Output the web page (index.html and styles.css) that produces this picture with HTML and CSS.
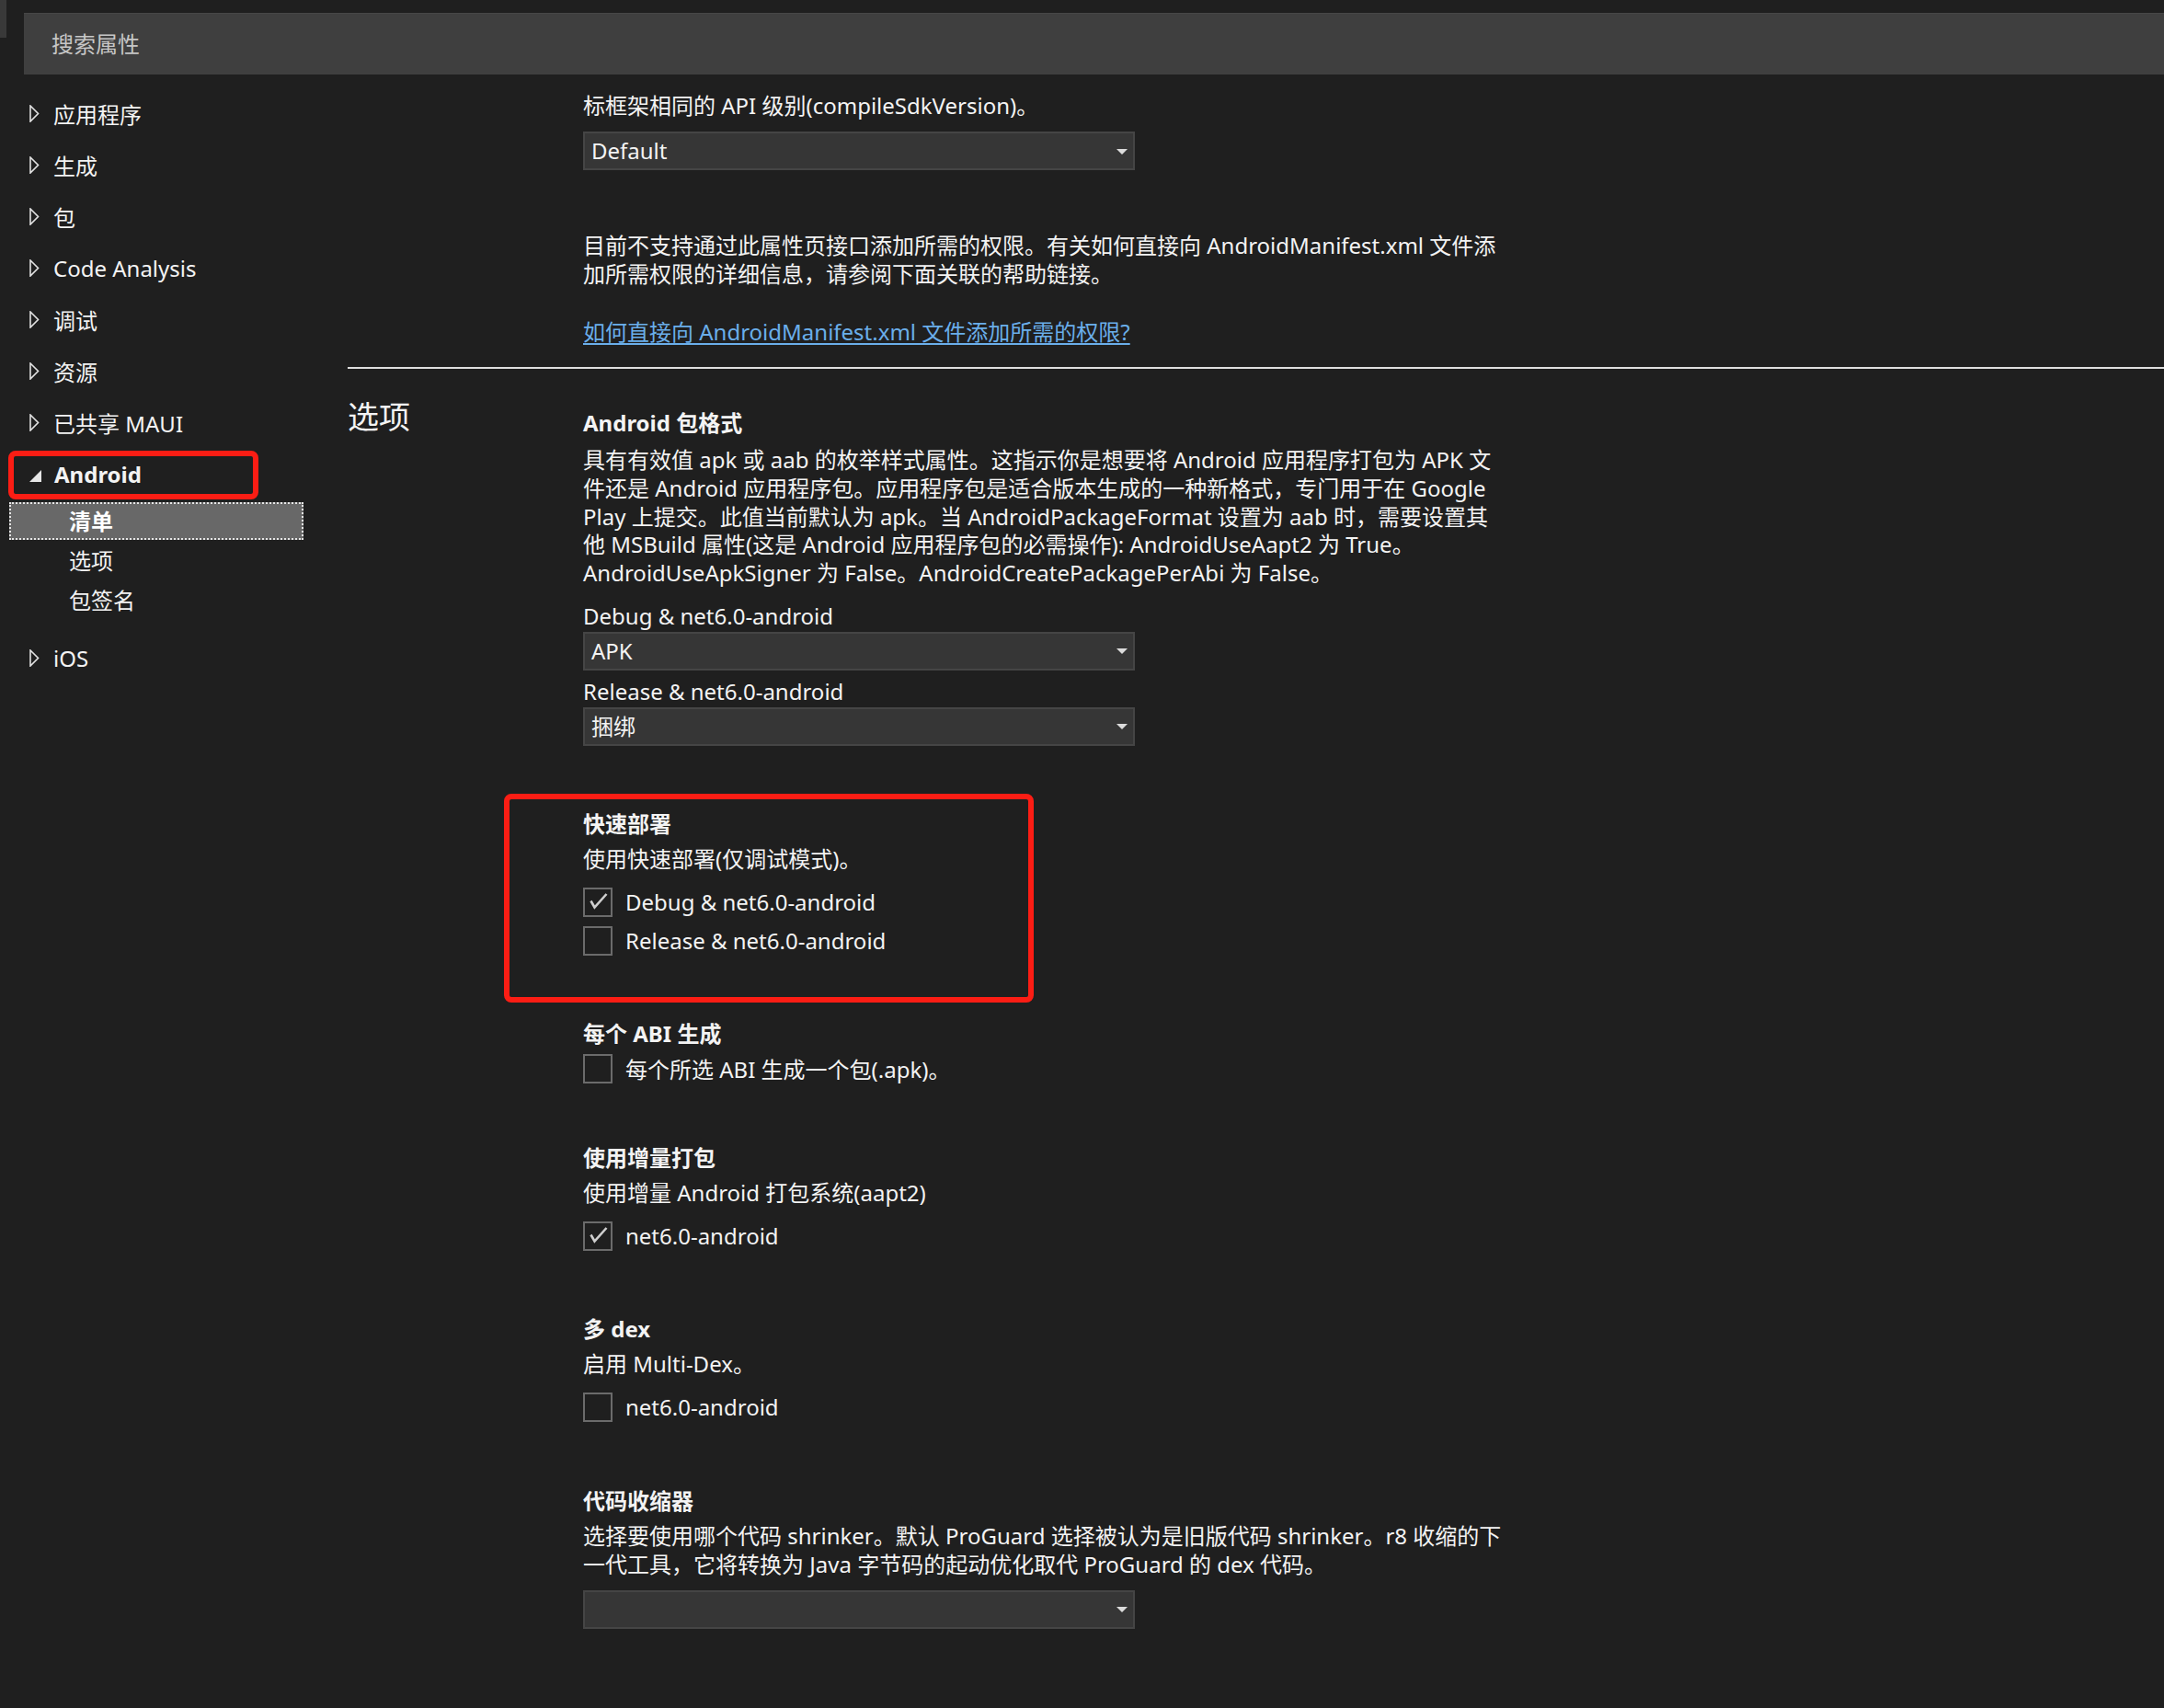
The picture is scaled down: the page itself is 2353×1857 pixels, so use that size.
FILE: index.html
```html
<!DOCTYPE html>
<html lang="zh-CN">
<head>
<meta charset="utf-8">
<title>属性</title>
<link rel="stylesheet" href="styles.css">
</head>
<body>
<div class="window">
  <header class="topbar">
    <div class="corner"></div>
    <div class="search">搜索属性</div>
  </header>
  <div class="main">
    <nav class="sidebar">
      <div class="node"><span class="twisty"><svg width="11" height="19" viewBox="0 0 11 19"><polygon points="1,1 9.5,9.5 1,18" fill="none" stroke="#e2e2e2" stroke-width="1.6" stroke-linejoin="miter"/></svg></span><span class="label">应用程序</span></div>
      <div class="node"><span class="twisty"><svg width="11" height="19" viewBox="0 0 11 19"><polygon points="1,1 9.5,9.5 1,18" fill="none" stroke="#e2e2e2" stroke-width="1.6"/></svg></span><span class="label">生成</span></div>
      <div class="node"><span class="twisty"><svg width="11" height="19" viewBox="0 0 11 19"><polygon points="1,1 9.5,9.5 1,18" fill="none" stroke="#e2e2e2" stroke-width="1.6"/></svg></span><span class="label">包</span></div>
      <div class="node"><span class="twisty"><svg width="11" height="19" viewBox="0 0 11 19"><polygon points="1,1 9.5,9.5 1,18" fill="none" stroke="#e2e2e2" stroke-width="1.6"/></svg></span><span class="label">Code Analysis</span></div>
      <div class="node"><span class="twisty"><svg width="11" height="19" viewBox="0 0 11 19"><polygon points="1,1 9.5,9.5 1,18" fill="none" stroke="#e2e2e2" stroke-width="1.6"/></svg></span><span class="label">调试</span></div>
      <div class="node"><span class="twisty"><svg width="11" height="19" viewBox="0 0 11 19"><polygon points="1,1 9.5,9.5 1,18" fill="none" stroke="#e2e2e2" stroke-width="1.6"/></svg></span><span class="label">资源</span></div>
      <div class="node"><span class="twisty"><svg width="11" height="19" viewBox="0 0 11 19"><polygon points="1,1 9.5,9.5 1,18" fill="none" stroke="#e2e2e2" stroke-width="1.6"/></svg></span><span class="label">已共享 MAUI</span></div>
      <div class="node expanded"><span class="twisty open"><svg width="13" height="13" viewBox="0 0 13 13"><polygon points="13,0 13,13 0,13" fill="#e6e6e6"/></svg></span><span class="label">Android</span><div class="annot annot-nav"></div></div>
      <div class="child selected">清单</div>
      <div class="child">选项</div>
      <div class="child">包签名</div>
      <div class="node ios"><span class="twisty"><svg width="11" height="19" viewBox="0 0 11 19"><polygon points="1,1 9.5,9.5 1,18" fill="none" stroke="#e2e2e2" stroke-width="1.6"/></svg></span><span class="label">iOS</span></div>
    </nav>

    <main class="content">
      <div class="top-block">
        <p class="line">标框架相同的 API 级别(compileSdkVersion)。</p>
        <div class="select select-top"><span>Default</span><svg width="12" height="6" viewBox="0 0 12 6"><polygon points="0,0 12,0 6,6" fill="#dcdcdc"/></svg></div>
        <p class="para para-note">目前不支持通过此属性页接口添加所需的权限。有关如何直接向 AndroidManifest.xml 文件添<br>加所需权限的详细信息，请参阅下面关联的帮助链接。</p>
        <p class="link-line"><a class="link" href="#">如何直接向 AndroidManifest.xml 文件添加所需的权限?</a></p>
      </div>
      <div class="divider"></div>

      <section class="group">
        <h2 class="group-title">选项</h2>
        <div class="fields">
          <div class="section first">
            <div class="title">Android 包格式</div>
            <p class="para desc desc-wide">具有有效值 apk 或 aab 的枚举样式属性。这指示你是想要将 Android 应用程序打包为 APK 文<br>件还是 Android 应用程序包。应用程序包是适合版本生成的一种新格式，专门用于在 Google<br>Play 上提交。此值当前默认为 apk。当 AndroidPackageFormat 设置为 aab 时，需要设置其<br>他 MSBuild 属性(这是 Android 应用程序包的必需操作): AndroidUseAapt2 为 True。<br>AndroidUseApkSigner 为 False。AndroidCreatePackagePerAbi 为 False。</p>
            <div class="config-label first-label">Debug &amp; net6.0-android</div>
            <div class="select after-label"><span>APK</span><svg width="12" height="6" viewBox="0 0 12 6"><polygon points="0,0 12,0 6,6" fill="#dcdcdc"/></svg></div>
            <div class="config-label">Release &amp; net6.0-android</div>
            <div class="select after-label"><span>捆绑</span><svg width="12" height="6" viewBox="0 0 12 6"><polygon points="0,0 12,0 6,6" fill="#dcdcdc"/></svg></div>
          </div>

          <div class="section marked">
            <div class="annot annot-deploy"></div>
            <div class="title">快速部署</div>
            <p class="para desc">使用快速部署(仅调试模式)。</p>
            <div class="check-list">
              <div class="check"><span class="box"><svg width="28" height="28" viewBox="0 0 28 28"><path d="M6.5 12.5 L10.5 19.5 L23.5 5" fill="none" stroke="#cfcfcf" stroke-width="2.6"/></svg></span><span>Debug &amp; net6.0-android</span></div>
              <div class="check"><span class="box"></span><span>Release &amp; net6.0-android</span></div>
            </div>
          </div>

          <div class="section">
            <div class="title">每个 ABI 生成</div>
            <div class="check-list tight">
              <div class="check"><span class="box"></span><span>每个所选 ABI 生成一个包(.apk)。</span></div>
            </div>
          </div>

          <div class="section incr">
            <div class="title">使用增量打包</div>
            <p class="para desc">使用增量 Android 打包系统(aapt2)</p>
            <div class="check-list">
              <div class="check"><span class="box"><svg width="28" height="28" viewBox="0 0 28 28"><path d="M6.5 12.5 L10.5 19.5 L23.5 5" fill="none" stroke="#cfcfcf" stroke-width="2.6"/></svg></span><span>net6.0-android</span></div>
            </div>
          </div>

          <div class="section">
            <div class="title">多 dex</div>
            <p class="para desc">启用 Multi-Dex。</p>
            <div class="check-list">
              <div class="check"><span class="box"></span><span>net6.0-android</span></div>
            </div>
          </div>

          <div class="section shrink">
            <div class="title">代码收缩器</div>
            <p class="para desc">选择要使用哪个代码 shrinker。默认 ProGuard 选择被认为是旧版代码 shrinker。r8 收缩的下<br>一代工具，它将转换为 Java 字节码的起动优化取代 ProGuard 的 dex 代码。</p>
            <div class="select select-shrink"><span></span><svg width="12" height="6" viewBox="0 0 12 6"><polygon points="0,0 12,0 6,6" fill="#dcdcdc"/></svg></div>
          </div>
        </div>
      </section>
    </main>
  </div>
</div>
</body>
</html>
```

FILE: styles.css
```css
html, body {
  margin: 0;
  padding: 0;
  background: #1f1f1f;
}

body {
  min-height: 100vh;
  font-family: "Noto Sans", "Noto Sans CJK SC", sans-serif;
  font-size: 24px;
  color: #f3f3f3;
}

.window {
  min-height: 1857px;
  background: #1f1f1f;
}

/* ---------- top bar ---------- */
.topbar {
  display: flex;
  align-items: flex-start;
}

.corner {
  flex: none;
  width: 7px;
  height: 41px;
  background: #393939;
}

.search {
  flex: 1;
  margin-left: 19px;
  margin-top: 14px;
  height: 67px;
  line-height: 67px;
  padding-left: 30px;
  background: #3f3f3f;
  box-shadow: inset 0 1px 0 #474747;
  color: #c6c6c6;
  font-size: 24px;
}

/* ---------- layout ---------- */
.main {
  display: flex;
  align-items: flex-start;
}

.sidebar {
  flex: none;
  width: 378px;
  padding-top: 16px;
}

.content {
  flex: 1;
  min-width: 0;
}

/* ---------- tree ---------- */
.node {
  position: relative;
  display: flex;
  align-items: center;
  height: 56px;
  padding-left: 32px;
  white-space: nowrap;
}

.twisty {
  flex: none;
  display: flex;
  align-items: center;
  width: 11px;
  margin-right: 15px;
  margin-top: -3px;
}

.twisty svg {
  display: block;
}

.twisty.open {
  width: 13px;
  margin-right: 14px;
  margin-top: 0;
}

.label {
  padding-bottom: 3px;
}

.node.expanded .label {
  font-weight: 700;
}

.child {
  height: 43px;
  line-height: 42px;
  padding-left: 75px;
  white-space: nowrap;
}

.child.selected {
  box-sizing: border-box;
  margin-left: 10px;
  width: 320px;
  height: 41px;
  line-height: 38px;
  margin-top: 1px;
  margin-bottom: 2px;
  padding-left: 63px;
  background: #686868;
  border: 2px dotted #e6e6e6;
  font-weight: 700;
  color: #ffffff;
}

.node.ios {
  margin-top: 14px;
}

/* ---------- annotations ---------- */
.annot {
  position: absolute;
  box-sizing: border-box;
  border: 6px solid #fb1d14;
  border-radius: 8px;
  pointer-events: none;
}

.annot-nav {
  top: 1px;
  left: 9px;
  width: 272px;
  height: 53px;
}

.annot-deploy {
  top: -17px;
  left: -86px;
  width: 576px;
  height: 227px;
}

/* ---------- content ---------- */
p {
  margin: 0;
}

.line,
.para,
.title,
.config-label,
.link-line {
  line-height: 31px;
  white-space: nowrap;
}

.top-block {
  padding-left: 256px;
  padding-top: 18px;
}

.select {
  box-sizing: border-box;
  width: 600px;
  height: 42px;
  display: flex;
  align-items: center;
  justify-content: space-between;
  padding: 0 6px 0 7px;
  background: #363636;
  border: 2px solid #454545;
  color: #f3f3f3;
  line-height: 1;
}

.select svg {
  flex: none;
  display: block;
  margin-top: 1px;
}

.select-top {
  margin-top: 13px;
}

.para-note {
  margin-top: 66px;
}

.link-line {
  margin-top: 32px;
}

.link {
  color: #6aaeea;
  text-decoration: underline;
  text-underline-offset: 3px;
}

.divider {
  margin-top: 23px;
  height: 2px;
  background: #dedede;
}

.group {
  display: grid;
  grid-template-columns: 256px 1fr;
  padding-top: 30px;
}

.group-title {
  margin: 0;
  font-size: 34px;
  font-weight: 400;
  line-height: 44px;
  white-space: nowrap;
}

.fields {
  padding-top: 13px;
  padding-bottom: 80px;
}

.section {
  position: relative;
  margin-top: 69px;
}

.section.first {
  margin-top: 0;
}

.section.incr {
  margin-top: 65px;
}

.section.shrink {
  margin-top: 70px;
}

.title {
  font-weight: 700;
}

.desc {
  margin-top: 7px;
}

.desc-wide {
  margin-top: 10px;
  line-height: 30.8px;
}

.config-label {
  margin-top: 7px;
}

.config-label.first-label {
  margin-top: 15px;
}

.select.after-label {
  margin-top: 2px;
}

.check-list {
  display: flex;
  flex-direction: column;
  gap: 10px;
  margin-top: 16px;
}

.check-list.tight {
  margin-top: 7px;
}

.check {
  display: flex;
  align-items: center;
  gap: 14px;
  height: 32px;
  white-space: nowrap;
}

.box {
  flex: none;
  box-sizing: border-box;
  width: 32px;
  height: 32px;
  border: 2px solid #6b6b6b;
  display: flex;
}

.box svg {
  display: block;
}

.select-shrink {
  margin-top: 13px;
}
```
